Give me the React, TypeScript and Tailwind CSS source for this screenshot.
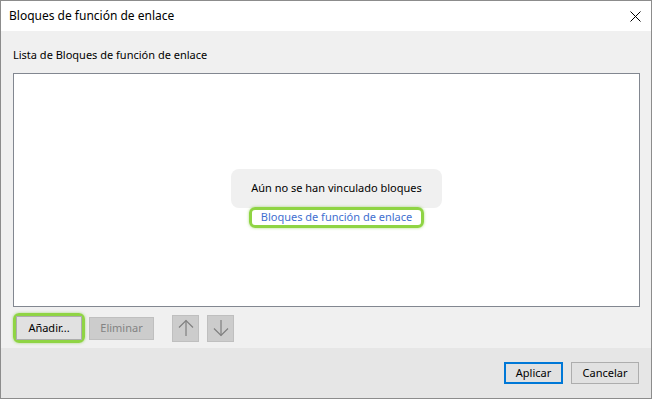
const font = { fontFamily: '"Segoe UI", "Noto Sans", "Open Sans", sans-serif' };

const Arrow = ({ down }: { down?: boolean }) => (
	<svg width="16" height="18" viewBox="0 0 16 18" fill="none" stroke="#7f7f7f" strokeWidth="1.2" className={down ? 'rotate-180' : ''}>
		<path d="M8 1.5V17" />
		<path d="M1 8.5L8 1.5L15 8.5" />
	</svg>
);

const App = () => (
	<div className="w-[652px] h-[399px] border border-[#8c8c8c] bg-[#f0f0f0] flex flex-col text-[11px] text-black" style={font}>
		{/* title bar */}
		<div className="h-[30px] bg-white flex items-center justify-between pl-2 pr-[10px] text-[12px]">
			<span>Bloques de función de enlace</span>
			<svg width="11" height="11" viewBox="0 0 11 11" stroke="#000" strokeWidth="1">
				<path d="M0.5 0.5L10.5 10.5M10.5 0.5L0.5 10.5" />
			</svg>
		</div>

		{/* body */}
		<div className="flex-1 flex flex-col pl-3 pr-[11px]">
			<div className="pt-4 leading-4">Lista de Bloques de función de enlace</div>
			<div className="mt-[10px] h-[234px] bg-white border border-[#828790] flex flex-col items-center pt-[95px] pl-5">
				<div className="w-[211px] h-[39px] rounded-lg bg-[#f0f0f0] flex items-center justify-center">
					Aún no se han vinculado bloques
				</div>
				<div className="h-[21px] rounded-md border-[3px] border-[#8fd444] shadow-[0_0_3px_rgba(120,200,50,0.6)] px-[9px] flex items-center text-[#3f6fd0] -mt-px">
					Bloques de función de enlace
				</div>
			</div>

			{/* buttons row */}
			<div className="flex items-center mt-[5px] h-[32px]">
				<div className="rounded-md border-[3px] border-[#8fd444] shadow-[0_0_3px_rgba(120,200,50,0.6)] flex">
					<button className="w-[66px] h-[24px] bg-[#e1e1e1] border border-[#adadad] flex items-center justify-center">Añadir...</button>
				</div>
				<button className="ml-[4px] w-[65px] h-[23px] bg-[#cccccc] border border-[#bfbfbf] text-[#838383] flex items-center justify-center">Eliminar</button>
				<button className="ml-[18px] w-[27px] h-[27px] bg-[#cccccc] border border-[#bfbfbf] flex items-center justify-center">
					<Arrow />
				</button>
				<button className="ml-[8px] w-[27px] h-[27px] bg-[#cccccc] border border-[#bfbfbf] flex items-center justify-center">
					<Arrow down />
				</button>
			</div>
		</div>

		{/* footer */}
		<div className="h-[50px] bg-[#e6e6e6] flex items-center justify-end gap-2 pr-3">
			<button className="w-[59px] h-[22px] bg-[#e1e1e1] border-2 border-[#0078d7] flex items-center justify-center">Aplicar</button>
			<button className="w-[68px] h-[22px] bg-[#e1e1e1] border border-[#adadad] flex items-center justify-center">Cancelar</button>
		</div>
	</div>
);

export default App;
